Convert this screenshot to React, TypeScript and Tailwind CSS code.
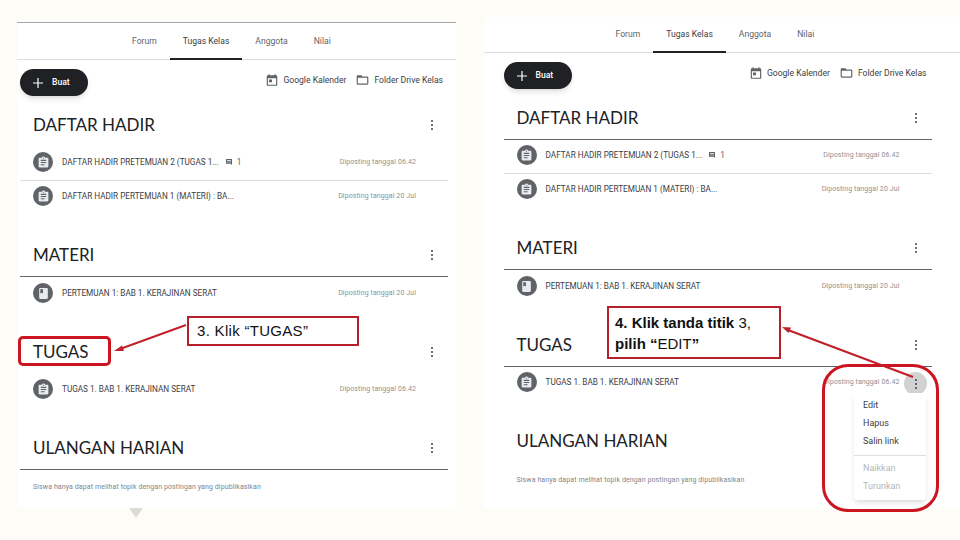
const ASSIGN = "M19 3h-4.18C14.4 1.84 13.3 1 12 1c-1.3 0-2.4.84-2.82 2H5c-1.1 0-2 .9-2 2v14c0 1.1.9 2 2 2h14c1.1 0 2-.9 2-2V5c0-1.1-.9-2-2-2zm-7 0c.55 0 1 .45 1 1s-.45 1-1 1-1-.45-1-1 .45-1 1-1zm2 14H7v-2h7v2zm3-4H7v-2h10v2zm0-4H7V7h10v2z";
const BOOK = "M18 2H6c-1.1 0-2 .9-2 2v16c0 1.1.9 2 2 2h12c1.1 0 2-.9 2-2V4c0-1.1-.9-2-2-2zM6 4h5v8l-2.5-1.5L6 12V4z";

function Kebab() {
  return (
    <svg width="12" height="12" viewBox="0 0 12 12" className="shrink-0">
      <circle cx="6" cy="2" r="1" fill="#3c4043" />
      <circle cx="6" cy="6" r="1" fill="#3c4043" />
      <circle cx="6" cy="10" r="1" fill="#3c4043" />
    </svg>
  );
}

function Row(props: { title: string; date: string; book?: boolean; comment?: boolean; divider?: boolean; pt?: string }) {
  return (
    <div className={"flex h-[34px] items-start " + (props.pt ?? "pt-[5px]") + (props.divider ? " border-b border-[#dadce0]" : "")}>
      <div className="ml-[13px] flex h-[20px] w-[20px] shrink-0 items-center justify-center rounded-full bg-[#5f6368]">
        <svg width="13" height="13" viewBox="0 0 24 24" fill="#e8eaed">
          <path d={props.book ? BOOK : ASSIGN} />
        </svg>
      </div>
      <div className="ml-[9px] flex h-[20px] flex-1 items-center justify-between pr-[32px]">
        <div className="flex items-center text-[8.2px] text-[#3c4043]">
          <span>{props.title}</span>
          {props.comment && (
            <span className="ml-[6px] flex items-center gap-[4px] text-[#5f6368]">
              <svg width="8" height="8" viewBox="0 0 24 24" fill="#5f6368">
                <path d="M21 3H3v14h14l4 4V3zM6 7h12v2H6V7zm0 4h12v2H6v-2z" />
              </svg>
              1
            </span>
          )}
        </div>
        <span className="text-[7px] tracking-[0.1px] text-[#8d9196]">{props.date}</span>
      </div>
    </div>
  );
}

function Section(props: { title: string; line: boolean; mt: string; children: React.ReactNode }) {
  return (
    <div className={props.mt}>
      <div className={"flex h-[43px] items-center justify-between border-b pb-[1px] pl-[13px] pr-[10px] " + (props.line ? "border-[#5f6368]" : "border-transparent")}>
        <span className="font-['Lato',sans-serif] text-[17px] leading-none text-[#202124]">{props.title}</span>
        <Kebab />
      </div>
      {props.children}
    </div>
  );
}

function Panel(props: { first: boolean; outer: string; barClass: string; inset: string }) {
  const f = props.first;
  const tabClass = "flex items-center px-[13px]";
  return (
    <div className={"shrink-0 bg-white font-['Roboto',sans-serif] " + props.outer}>
      <div className={"flex items-center border-b border-[#dadce0] " + props.barClass + " " + props.inset}>
        <nav className="ml-[102px] flex h-full text-[8.6px] text-[#5f6368]">
          <span className={tabClass}>Forum</span>
          <span className={tabClass + " relative text-[#3c4043]"}>
            Tugas Kelas
            <span className="absolute bottom-[-1px] left-0 h-[2px] w-full bg-[#202124]" />
          </span>
          <span className={tabClass}>Anggota</span>
          <span className={tabClass}>Nilai</span>
        </nav>
      </div>
      <div className={"w-[439px] box-content " + props.inset}>
        <div className="flex items-start justify-between pl-[3px] pr-[13px] pt-[9px]">
          <div className="flex h-[27px] w-[68px] items-center rounded-full bg-[#202124] pl-[12px] text-[8.6px] font-medium text-white shadow-md">
            <svg width="12" height="12" viewBox="0 0 12 12" stroke="#fff" strokeWidth="1.2">
              <path d="M6 1v10M1 6h10" />
            </svg>
            <span className="ml-[8px]">Buat</span>
          </div>
          <div className="flex items-center pt-[4px] text-[8.6px] text-[#3c4043]">
            <svg width="14" height="14" viewBox="0 0 24 24" fill="#5f6368">
              <path d="M19 4h-1V2h-2v2H8V2H6v2H5a2 2 0 0 0-2 2v14a2 2 0 0 0 2 2h14a2 2 0 0 0 2-2V6a2 2 0 0 0-2-2zm0 16H5V9h14v11zM7 11h5v5H7z" />
            </svg>
            <span className="ml-[4px]">Google Kalender</span>
            <svg className="ml-[9px]" width="15" height="14" viewBox="0 0 24 24" fill="#5f6368">
              <path d="M20 6h-8l-2-2H4a2 2 0 0 0-2 2v12a2 2 0 0 0 2 2h16a2 2 0 0 0 2-2V8a2 2 0 0 0-2-2zm0 12H4V8h16v10z" />
            </svg>
            <span className="ml-[4px]">Folder Drive Kelas</span>
          </div>
        </div>
        <div className="box-content w-[428px] pl-[3px]">
          <Section title="DAFTAR HADIR" line={!f} mt="mt-[8px]">
            <Row title="DAFTAR HADIR PRETEMUAN 2 (TUGAS 1..." date="Diposting tanggal 06.42" comment divider />
            <Row title="DAFTAR HADIR PERTEMUAN 1 (MATERI) : BA..." date="Diposting tanggal 20 Jul" />
          </Section>
          <Section title="MATERI" line mt="mt-[19px]">
            <Row title="PERTEMUAN 1: BAB 1. KERAJINAN SERAT" date="Diposting tanggal 20 Jul" book pt="pt-[6px]" />
          </Section>
          <Section title="TUGAS" line={!f} mt="mt-[20px]">
            <Row title="TUGAS 1. BAB 1. KERAJINAN SERAT" date="Diposting tanggal 06.42" />
          </Section>
          <Section title="ULANGAN HARIAN" line={f} mt="mt-[19px]">
            <p className="ml-[13px] mt-[12px] text-[7px] tracking-[0.1px] text-[#80868b]">
              Siswa hanya dapat melihat topik dengan postingan yang dipublikasikan
            </p>
          </Section>
        </div>
      </div>
    </div>
  );
}

export default function App() {
  return (
    <div className="relative flex h-[540px] w-[960px] items-start overflow-hidden bg-[#fefcf6]">
      <Panel first outer="ml-[17px] mt-[22px] h-[486px] w-[439px] border-t border-[#a8a8a8]" barClass="h-[37px]" inset="" />
      <Panel first={false} outer="ml-[28px] mt-[17px] h-[491px] w-[476px]" barClass="h-[36px]" inset="pl-[16.5px]" />

      {/* triangle under the left panel */}
      <svg className="absolute left-[128px] top-[508px]" width="15" height="11" viewBox="0 0 15 11">
        <polygon points="1,0 15,0 8,10" fill="#dcdcd5" />
      </svg>

      {/* callout 3 */}
      <div className="absolute left-[187px] top-[316px] flex h-[30px] w-[172px] items-center border-2 border-[#b5202a] bg-white pl-[8px] font-['Liberation_Sans',sans-serif] text-[15px] tracking-[0.3px] text-[#111]">
        3. Klik “TUGAS”
      </div>
      <div className="absolute left-[18px] top-[336px] h-[30px] w-[93px] rounded-[5px] border-[3px] border-[#cc1520]" />

      {/* callout 4 */}
      <div className="absolute left-[607px] top-[306px] h-[53px] w-[174px] border-2 border-[#b5202a] bg-white pl-[6px] pt-[4px] font-['Liberation_Sans',sans-serif] text-[15px] font-bold leading-[21px] text-[#111]">
        4. Klik tanda titik <span className="font-normal">3,</span>
        <br />
        pilih “<span className="font-normal">EDIT</span>”
      </div>

      {/* hover circle */}
      <div className="absolute left-[904px] top-[372px] flex h-[23px] w-[23px] items-center justify-center rounded-full bg-[#d2d2d2]">
        <Kebab />
      </div>

      {/* menu */}
      <div className="absolute left-[854px] top-[393px] flex h-[107px] w-[72px] flex-col rounded-[3px] bg-white pt-[4px] font-['Roboto',sans-serif] text-[9px] text-[#3c4043] shadow-md">
        <span className="flex h-[18px] items-center pl-[9px]">Edit</span>
        <span className="flex h-[18px] items-center pl-[9px]">Hapus</span>
        <span className="flex h-[18px] items-center pl-[9px]">Salin link</span>
        <div className="my-[4px] border-t border-[#e0e0e0]" />
        <span className="flex h-[18px] items-center pl-[9px] text-[#b4b6b9]">Naikkan</span>
        <span className="flex h-[18px] items-center pl-[9px] text-[#b4b6b9]">Turunkan</span>
      </div>
      <div className="absolute left-[822px] top-[364px] h-[148px] w-[117px] rounded-[26px] border-[3px] border-[#cc1520]" />

      {/* arrows */}
      <svg className="pointer-events-none absolute left-0 top-0" width="960" height="540" viewBox="0 0 960 540">
        <path d="M186 325 L120 349" stroke="#c0202a" strokeWidth="2" />
        <polygon points="114,351 122,345.5 124,351" fill="#c0202a" />
        <path d="M913 377 L788 330" stroke="#c0202a" strokeWidth="2.2" />
        <polygon points="782,327 791,327.5 788.5,333" fill="#c0202a" />
      </svg>
    </div>
  );
}
